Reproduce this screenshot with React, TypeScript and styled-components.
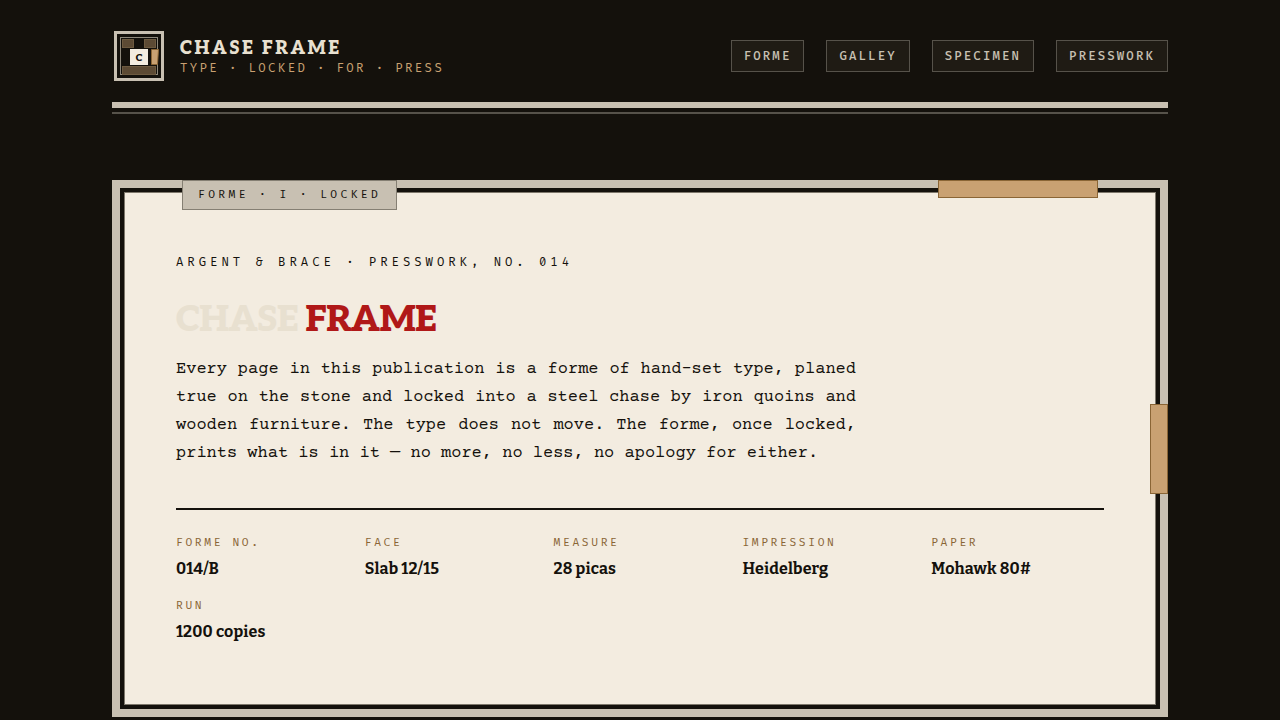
import React from "react";
import styled, { createGlobalStyle } from "styled-components";

const ink = "#14110c";
const cream = "#f3ece0";
const steel = "#c8c0b2";
const wood = "#c9a172";
const woodEdge = "#8a6535";
const mono = `"Fira Code", "Fira Mono", "Liberation Mono", monospace`;
const display = `Aleo, "DejaVu Serif", serif`;
const slab = `Bitter, "DejaVu Serif", serif`;
const typewriter = `"Courier Prime", "Liberation Mono", monospace`;

const GlobalStyle = createGlobalStyle`
  * { box-sizing: border-box; }
  body { margin: 0; background: ${ink}; color: ${ink}; font-family: ${typewriter}; }
  h1, p, dl, dd { margin: 0; }
`;

const Shell = styled.div`
  max-width: 1120px;
  margin: 0 auto;
  padding: 0 32px;
`;

const Header = styled.header`
  display: flex;
  flex-wrap: wrap;
  align-items: center;
  justify-content: space-between;
  gap: 16px;
  padding: 28px 0 18px;
`;

const HeaderRule = styled.div`
  height: 12px;
  border-top: 6px solid ${steel};
  border-bottom: 2px solid #56524a;
`;

const Brand = styled.a`
  display: flex;
  align-items: center;
  gap: 12px;
  text-decoration: none;
`;

const BrandText = styled.span`
  display: flex;
  flex-direction: column;
  padding-top: 4px;
`;

const BrandName = styled.span`
  font: 900 18px/22px ${display};
  letter-spacing: 0.14em;
  color: #e8e0d0;
`;

const BrandTag = styled.span`
  font: 400 12px/18px ${mono};
  letter-spacing: 0.2em;
  color: ${wood};
`;

const Nav = styled.nav`
  display: flex;
  flex-wrap: wrap;
  gap: 22px;
`;

const NavLink = styled.a`
  padding: 8px 12px 6px;
  border: 1px solid #56524a;
  background: #1f1b14;
  color: ${steel};
  font: 500 12px/16px ${mono};
  letter-spacing: 0.18em;
  text-decoration: none;
`;

const Forme = styled.section`
  position: relative;
  margin-top: 66px;
  border: 8px solid ${steel};
  background: ${ink};
  padding: 4px;
`;

const Page = styled.div`
  border: 1px solid #7d776b;
  background: ${cream};
  padding: 58px 51px 61px;
`;

const LockTag = styled.span`
  position: absolute;
  top: -8px;
  left: 62px;
  padding: 6px 15px;
  border: 1px solid #857f73;
  background: ${steel};
  font: 400 11px/16px ${mono};
  letter-spacing: 0.31em;
`;

const Furniture = styled.span<{ $side: "top" | "right" }>`
  position: absolute;
  border: 1px solid ${woodEdge};
  background: ${wood};
  ${({ $side }) =>
    $side === "top"
      ? "top: -8px; right: 62px; width: 160px; height: 18px;"
      : "top: 50%; right: -8px; width: 18px; height: 90px; transform: translateY(-50%);"}
`;

const Imprint = styled.p`
  font: 400 12px/24px ${mono};
  letter-spacing: 0.33em;
`;

const Title = styled.h1`
  margin-top: 25px;
  font: 900 36px/40px ${display};
  letter-spacing: -0.02em;
  color: #e8e0d0;
`;

const TitleAccent = styled.span`
  color: #b01818;
`;

const Lede = styled.p`
  max-width: 680px;
  margin-top: 16px;
  font-size: 17px;
  line-height: 28px;
  text-align: justify;
`;

const Specs = styled.dl`
  display: grid;
  grid-template-columns: repeat(auto-fill, minmax(160px, 1fr));
  gap: 16px;
  margin-top: 40px;
  padding-top: 23px;
  border-top: 2px solid ${ink};
`;

const SpecLabel = styled.dt`
  font: 400 11px/20px ${mono};
  letter-spacing: 0.24em;
  color: ${woodEdge};
`;

const SpecValue = styled.dd`
  margin-top: 4px;
  font: 700 16px/23px ${slab};
  letter-spacing: 0.01em;
`;

const specs = [
  ["FORME NO.", "014/B"],
  ["FACE", "Slab 12/15"],
  ["MEASURE", "28 picas"],
  ["IMPRESSION", "Heidelberg"],
  ["PAPER", "Mohawk 80#"],
  ["RUN", "1200 copies"],
];

const links = ["FORME", "GALLEY", "SPECIMEN", "PRESSWORK"];

function Logo() {
  return (
    <svg width="56" height="56" viewBox="0 0 56 56" aria-hidden="true">
      <rect x="3.5" y="4.5" width="47" height="47" fill={ink} stroke={steel} strokeWidth="3" />
      <rect x="8.5" y="9.5" width="37" height="37" fill="none" stroke="#8f897c" />
      <rect x="10.5" y="11.5" width="11" height="8" fill="#5c4a34" stroke="#6d5a40" />
      <rect x="32.5" y="11.5" width="11" height="8" fill="#5c4a34" stroke="#6d5a40" />
      <rect x="10.5" y="38.5" width="33" height="8" fill="#5c4a34" stroke="#6d5a40" />
      <path d="M39.5 21.5h7l-1 15h-6z" fill={wood} stroke={woodEdge} />
      <rect x="18" y="21" width="18" height="16" fill={cream} />
      <text x="27" y="33" textAnchor="middle" fontFamily={display} fontWeight="900" fontSize="10" fill={ink}>C</text>
    </svg>
  );
}

export default function App() {
  return (
    <>
      <GlobalStyle />
      <Shell>
        <Header>
          <Brand href="#">
            <Logo />
            <BrandText>
              <BrandName>CHASE FRAME</BrandName>
              <BrandTag>TYPE · LOCKED · FOR · PRESS</BrandTag>
            </BrandText>
          </Brand>
          <Nav>
            {links.map((l) => (
              <NavLink key={l} href={"#" + l.toLowerCase()}>{l}</NavLink>
            ))}
          </Nav>
        </Header>
        <HeaderRule />
        <Forme>
          <LockTag>FORME · I · LOCKED</LockTag>
          <Furniture $side="top" />
          <Furniture $side="right" />
          <Page>
            <Imprint>ARGENT &amp; BRACE · PRESSWORK, NO. 014</Imprint>
            <Title>CHASE <TitleAccent>FRAME</TitleAccent></Title>
            <Lede>
              Every page in this publication is a forme of hand-set type, planed true on the stone and
              locked into a steel chase by iron quoins and wooden furniture. The type does not move. The
              forme, once locked, prints what is in it — no more, no less, no apology for either.
            </Lede>
            <Specs>
              {specs.map(([k, v]) => (
                <div key={k}>
                  <SpecLabel>{k}</SpecLabel>
                  <SpecValue>{v}</SpecValue>
                </div>
              ))}
            </Specs>
          </Page>
        </Forme>
      </Shell>
    </>
  );
}
